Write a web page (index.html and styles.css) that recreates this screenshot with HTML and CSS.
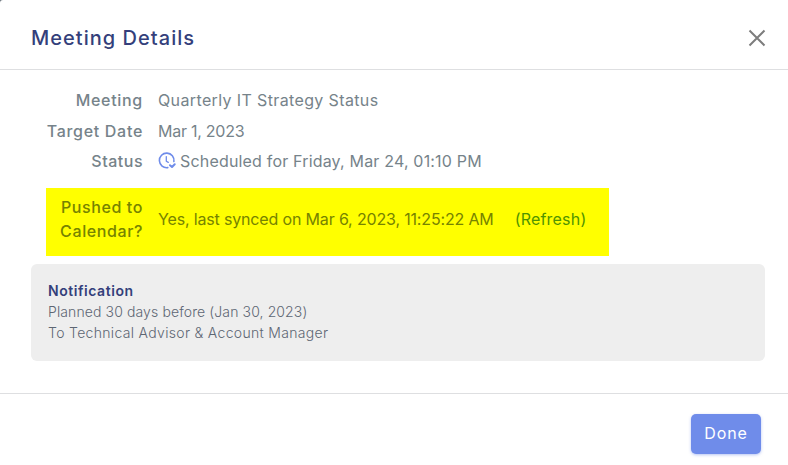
FILE: index.html
```html
<!DOCTYPE html>
<html lang="en">
<head>
    <meta charset="UTF-8">
    <meta name="viewport" content="width=device-width, initial-scale=1.0">
    <title>Meeting Details</title>
    <link rel="stylesheet" href="styles.css">
</head>
<body>
<div class="modal">
    <div class="modal-header">
        <h1 class="modal-title">Meeting Details</h1>
        <button class="close" aria-label="Close">
            <svg width="18" height="18" viewBox="0 0 18 18" fill="none" stroke="#7d7d7d" stroke-width="2">
                <path d="M1.5 1.5l15 15M16.5 1.5l-15 15"/>
            </svg>
        </button>
    </div>

    <div class="modal-body">
        <div class="row">
            <div class="label">Meeting</div>
            <div class="value">Quarterly IT Strategy Status</div>
        </div>
        <div class="row">
            <div class="label">Target Date</div>
            <div class="value value-date">Mar 1, 2023</div>
        </div>
        <div class="row">
            <div class="label label-status">Status</div>
            <div class="value value-status">
                <svg width="18" height="18" viewBox="0 0 18 18" fill="none" stroke="#6f8cea" stroke-width="1.6" stroke-linecap="round" stroke-linejoin="round">
                    <path d="M9.8 15.6A7.3 7.3 0 1 1 15.9 9.5"/>
                    <path d="M8.3 4.6v4.6l2 1.2" stroke-width="1.3"/>
                    <path d="M12 13.2l2 1.8 2.7-2.7" stroke-width="2"/>
                </svg>
                <span>Scheduled for Friday, Mar 24, 01:10 PM</span>
            </div>
        </div>
        <div class="row row-highlight">
            <div class="label">Pushed to<br>Calendar?</div>
            <div class="value value-sync">Yes, last synced on Mar 6, 2023, 11:25:22 AM</div>
            <a class="refresh">(Refresh)</a>
        </div>

        <div class="notification">
            <div class="notification-title">Notification</div>
            <div class="notification-plan">Planned 30 days before (Jan 30, 2023)</div>
            <div>To Technical Advisor &amp; Account Manager</div>
        </div>
    </div>

    <div class="modal-footer">
        <button class="done">Done</button>
    </div>
</div>
</body>
</html>
```
FILE: styles.css
```css
* {
    box-sizing: border-box;
}
body {
    margin: 0;
    font-family: Inter, sans-serif;
    font-size: 16px;
    line-height: 24px;
    color: #76838a;
    background: #6b747c;
}
.modal {
    display: flex;
    flex-direction: column;
    height: 465px;
    background: white;
    border-top-left-radius: 3px;
    overflow: hidden;
    white-space: nowrap;
}
.modal-header {
    display: flex;
    justify-content: space-between;
    align-items: center;
    height: 70px;
    padding: 6px 22px 0 31px;
    border-bottom: 1px solid #dedfe1;
}
.modal-title {
    margin: 0;
    font-size: 20px;
    font-weight: 500;
    letter-spacing: 1.03px;
    color: #343f7b;
}
.close {
    display: flex;
    padding: 0;
    border: 0;
    background: none;
}
.modal-body {
    display: flex;
    flex-direction: column;
    height: 323px;
    padding: 18px 23px 0 31px;
}
.row {
    display: flex;
    align-items: center;
    gap: 15px;
    margin-bottom: 6.5px;
}
.label {
    width: 112px;
    text-align: right;
    font-weight: 500;
    letter-spacing: 0.7px;
}
.label-status {
    letter-spacing: 0.5px;
}
.value {
    letter-spacing: 0.37px;
}
.value-date {
    letter-spacing: -0.25px;
}
.value-status {
    display: flex;
    align-items: center;
    gap: 4px;
    letter-spacing: 0.18px;
}
.value-sync {
    letter-spacing: -0.16px;
}
.row-highlight {
    width: 563px;
    height: 68px;
    margin: 8.5px 0 8px 15px;
    padding-bottom: 6px;
    background: #ffff00;
    color: #768300;
}
.row-highlight .label {
    width: 97px;
    letter-spacing: 0.6px;
}
.refresh {
    margin-left: 6px;
    letter-spacing: 0.2px;
    color: #4f9400;
}
.notification {
    height: 97px;
    padding: 16px 17px;
    border-radius: 6px;
    background: #eeeeee;
    font-size: 14px;
    font-weight: 300;
    line-height: 21px;
    color: #5d6673;
    letter-spacing: 0.32px;
}
.notification-title {
    font-weight: 600;
    letter-spacing: 0.55px;
    color: #343f7b;
}
.notification-plan {
    letter-spacing: 0.11px;
}
.modal-footer {
    display: flex;
    justify-content: flex-end;
    padding: 20px 27px 0 0;
    border-top: 1px solid #dedfe1;
}
.done {
    width: 70px;
    height: 40px;
    padding: 0 0 2px;
    border: 0;
    border-radius: 5px;
    background: #6f8cea;
    box-shadow: 0 1px 3px rgba(111, 140, 234, 0.5);
    font: inherit;
    letter-spacing: 0.9px;
    color: white;
}
```
